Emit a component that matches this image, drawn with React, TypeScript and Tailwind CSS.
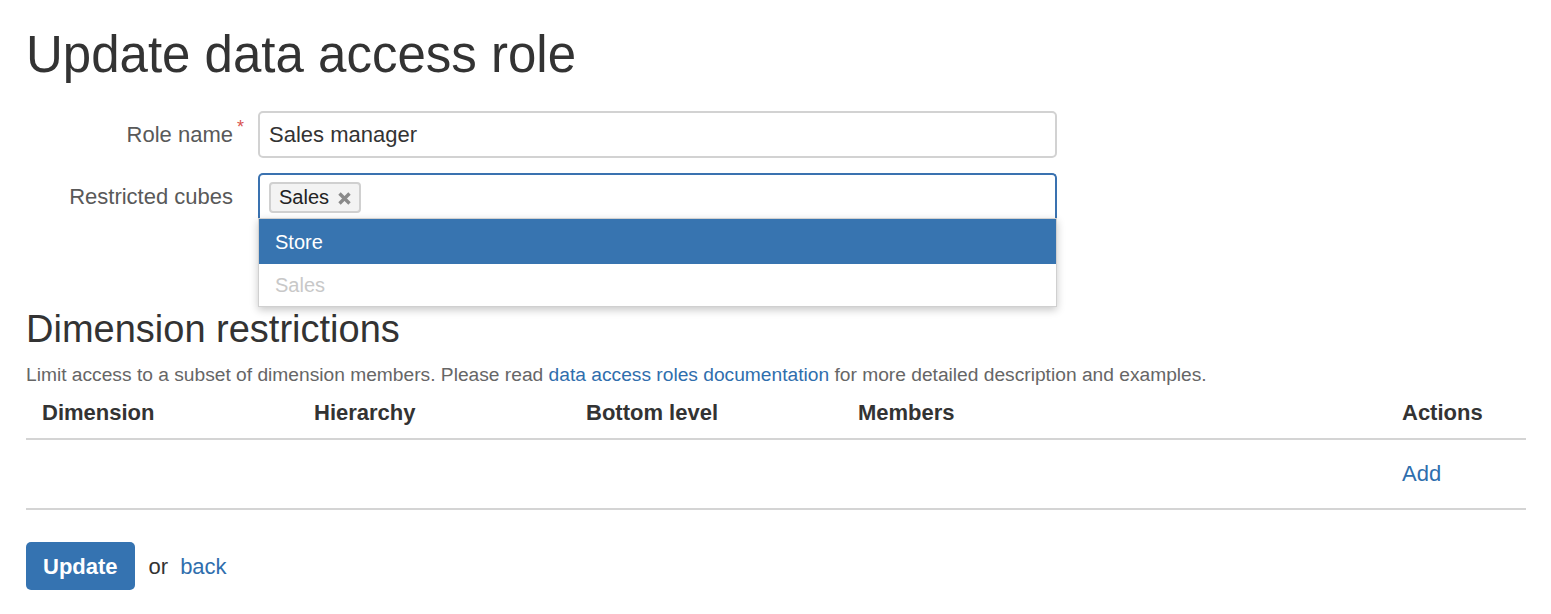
import { useState } from "react"

const columns = ["Dimension", "Hierarchy", "Bottom level", "Members", "Actions"]

function RemoveIcon() {
  return (
    <svg width="15" height="15" viewBox="0 0 15 15" className="ml-[8px] mt-[3px]">
      <path d="M2.5 2.5 L12.5 12.5 M12.5 2.5 L2.5 12.5" stroke="#8a8a8a" strokeWidth="3.4" strokeLinecap="butt" />
    </svg>
  )
}

export default function App() {
  const [roleName, setRoleName] = useState("Sales manager")

  return (
    <div className="min-h-screen bg-white pl-[26px] pr-[25px] text-[#333] font-['Liberation_Sans',Arial,sans-serif]">
      <h1 className="pt-[27px] text-[51px] leading-[56px] font-normal">Update data access role</h1>

      {/* Form */}
      <form className="mt-[28px]" onSubmit={(e) => e.preventDefault()}>
        <div className="flex items-center">
          <label className="relative w-[207px] text-right text-[22px] text-[#595959]">
            Role name
            <span className="absolute right-[-11px] top-[-4px] text-[18px] text-[#d9534f]">*</span>
          </label>
          <input
            value={roleName}
            onChange={(e) => setRoleName(e.target.value)}
            className="ml-[25px] h-[47px] w-[799px] rounded-[5px] border-2 border-[#d2d2d2] px-[9px] text-[22px] text-[#333] outline-none"
          />
        </div>

        <div className="mt-[15px] flex items-center">
          <label className="w-[207px] text-right text-[22px] text-[#595959]">Restricted cubes</label>
          <div className="relative ml-[25px] w-[799px]">
            <div className="flex h-[46px] items-center rounded-t-[5px] border-2 border-b-0 border-[#3a72b0] px-[9px]">
              <span className="flex h-[31px] items-center rounded-[4px] border-2 border-[#d0d0d0] bg-[#f3f3f3] pl-[8px] pr-[7px] text-[20px] text-[#222]">
                Sales
                <RemoveIcon />
              </span>
            </div>
            {/* Dropdown menu */}
            <ul className="absolute left-0 right-0 top-[45px] border border-[#d0d0d0] bg-white shadow-[0_3px_8px_rgba(0,0,0,0.22)]">
              <li className="flex h-[45px] items-center bg-[#3774b0] pl-[16px] text-[20px] text-white">Store</li>
              <li className="flex h-[42px] items-center pl-[16px] text-[20px] text-[#c8c8c8]">Sales</li>
            </ul>
          </div>
        </div>
      </form>

      <h2 className="mt-[89px] text-[38px] leading-[42px] font-normal">Dimension restrictions</h2>
      <p className="mt-[12px] text-[19.2px] leading-[25px] text-[#666]">
        Limit access to a subset of dimension members. Please read{" "}
        <a href="#" className="text-[#2f6ead]">
          data access roles documentation
        </a>{" "}
        for more detailed description and examples.
      </p>

      {/* Table */}
      <div className="w-[1500px]">
        <div className="grid grid-cols-[272px_272px_272px_544px_140px] border-b-2 border-[#d4d4d4]">
          {columns.map((c) => (
            <div key={c} className="px-[16px] pt-[10px] pb-[9px] text-[22px] leading-[32px] font-bold text-[#333]">
              {c}
            </div>
          ))}
        </div>
        <div className="grid grid-cols-[272px_272px_272px_544px_140px] border-b-2 border-[#d4d4d4]">
          <div />
          <div />
          <div />
          <div />
          <div className="px-[16px] py-[18px] text-[22px] leading-[32px]">
            <a href="#" className="text-[#2f6ead]">
              Add
            </a>
          </div>
        </div>
      </div>

      <div className="mt-[32px] flex items-center text-[22px]">
        <button className="h-[48px] rounded-[5px] bg-[#3573b1] px-[17px] font-bold text-white">Update</button>
        <span className="ml-[14px]">or</span>
        <a href="#" className="ml-[12px] text-[#2f6ead]">
          back
        </a>
      </div>
    </div>
  )
}
